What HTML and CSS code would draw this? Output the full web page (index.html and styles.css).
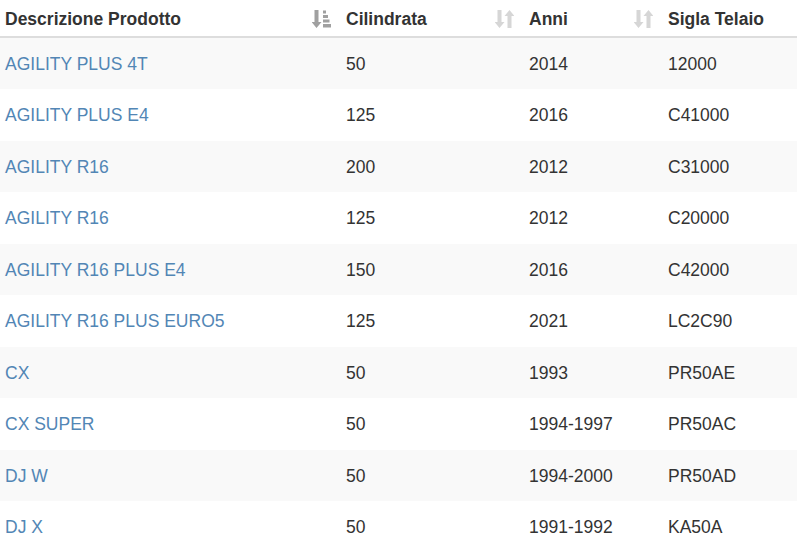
FILE: index.html
```html
<!DOCTYPE html>
<html lang="it">
<head>
<meta charset="utf-8">
<title>Prodotti</title>
<link rel="stylesheet" href="styles.css">
</head>
<body>
<div class="wrap">
<table class="grid">
  <colgroup>
    <col class="c1"><col class="c2"><col class="c3"><col class="c4">
  </colgroup>
  <thead>
    <tr>
      <th><div class="head"><span>Descrizione Prodotto</span>
        <svg class="ico" width="19" height="18" viewBox="0 0 19 18"><path d="M2.5 0h4v12h3l-5 6-5-6h3z" fill="#a0a0a0"/><rect x="11" y="0.5" width="3" height="3" fill="#a0a0a0"/><rect x="11" y="5" width="5" height="3" fill="#a0a0a0"/><rect x="11" y="9.5" width="6.5" height="3" fill="#a0a0a0"/><rect x="11" y="14" width="8" height="3.5" fill="#a0a0a0"/></svg></div></th>
      <th><div class="head"><span>Cilindrata</span>
        <svg class="ico" width="19" height="18" viewBox="0 0 19 18"><path d="M2.5 0h4v12h3l-5 6-5-6h3z" fill="#d6d6d6"/><path d="M12.5 18h4v-12h3l-5-6-5 6h3z" fill="#d6d6d6"/></svg></div></th>
      <th><div class="head"><span>Anni</span>
        <svg class="ico" width="19" height="18" viewBox="0 0 19 18"><path d="M2.5 0h4v12h3l-5 6-5-6h3z" fill="#d6d6d6"/><path d="M12.5 18h4v-12h3l-5-6-5 6h3z" fill="#d6d6d6"/></svg></div></th>
      <th><div class="head"><span>Sigla Telaio</span>
        <svg class="ico" width="19" height="18" viewBox="0 0 19 18"><path d="M2.5 0h4v12h3l-5 6-5-6h3z" fill="#d6d6d6"/><path d="M12.5 18h4v-12h3l-5-6-5 6h3z" fill="#d6d6d6"/></svg></div></th>
    </tr>
  </thead>
  <tbody>
    <tr><td><a href="#">AGILITY PLUS 4T</a></td><td>50</td><td>2014</td><td>12000</td></tr>
    <tr><td><a href="#">AGILITY PLUS E4</a></td><td>125</td><td>2016</td><td>C41000</td></tr>
    <tr><td><a href="#">AGILITY R16</a></td><td>200</td><td>2012</td><td>C31000</td></tr>
    <tr><td><a href="#">AGILITY R16</a></td><td>125</td><td>2012</td><td>C20000</td></tr>
    <tr><td><a href="#">AGILITY R16 PLUS E4</a></td><td>150</td><td>2016</td><td>C42000</td></tr>
    <tr><td><a href="#">AGILITY R16 PLUS EURO5</a></td><td>125</td><td>2021</td><td>LC2C90</td></tr>
    <tr><td><a href="#">CX</a></td><td>50</td><td>1993</td><td>PR50AE</td></tr>
    <tr><td><a href="#">CX SUPER</a></td><td>50</td><td>1994-1997</td><td>PR50AC</td></tr>
    <tr><td><a href="#">DJ W</a></td><td>50</td><td>1994-2000</td><td>PR50AD</td></tr>
    <tr><td><a href="#">DJ X</a></td><td>50</td><td>1991-1992</td><td>KA50A</td></tr>
  </tbody>
</table>
</div>
</body>
</html>
```
FILE: styles.css
```css
html, body {
  margin: 0;
  padding: 0;
  background: #fff;
  overflow: hidden;
}
.wrap {
  width: 797px;
  height: 552px;
  overflow: hidden;
}
.grid {
  width: 840px;
  table-layout: fixed;
  border-collapse: collapse;
  font-family: "Liberation Sans", Arial, sans-serif;
  font-size: 17.5px;
  color: #333;
}
.c1 { width: 341px; }
.c2 { width: 183px; }
.c3 { width: 139px; }
.c4 { width: 177px; }
.grid th {
  text-align: left;
  font-weight: bold;
  padding: 8px 10px 6px 5px;
  line-height: 22px;
  border-bottom: 2px solid #ddd;
}
.head {
  display: flex;
  justify-content: space-between;
  align-items: center;
}
.ico { display: block; }
.grid td {
  padding: 15px 5px 13px;
  line-height: 23.44px;
  white-space: nowrap;
}
.grid tbody tr:nth-child(odd) td {
  background: #f9f9f9;
}
.grid a {
  color: #5286b5;
  text-decoration: none;
}
```
